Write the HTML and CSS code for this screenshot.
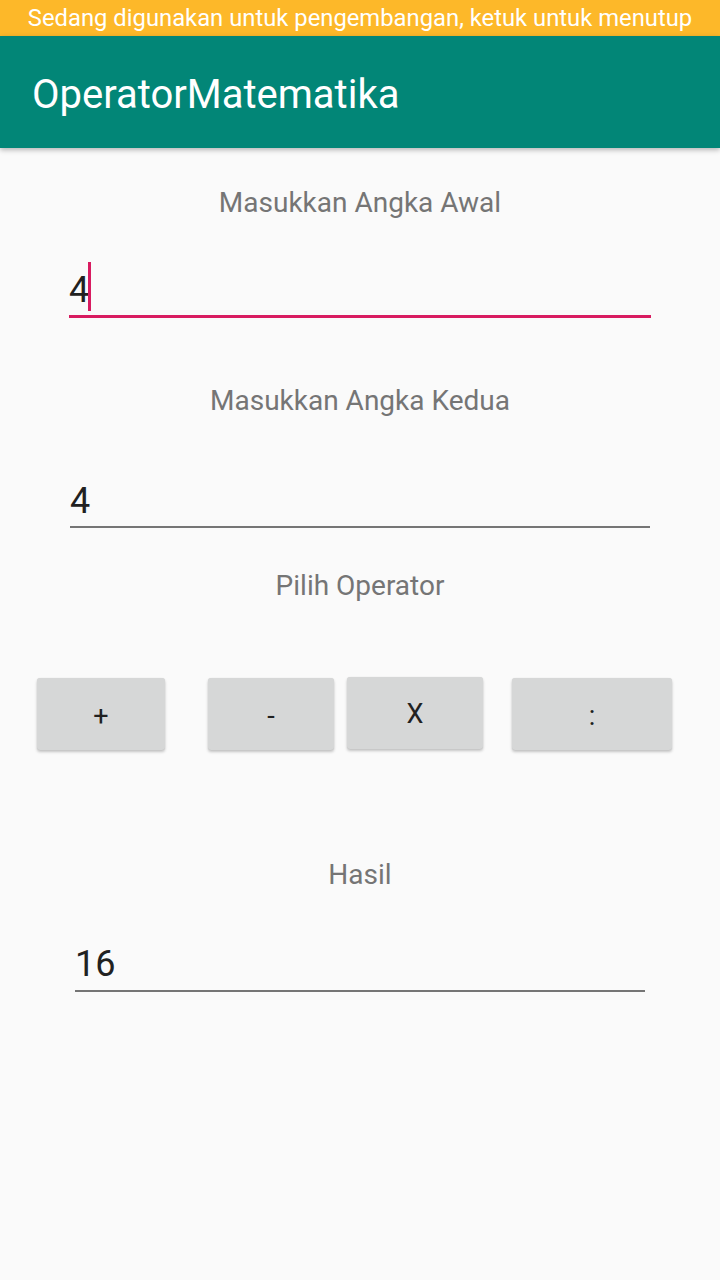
FILE: index.html
```html
<!DOCTYPE html>
<html lang="id">
<head>
<meta charset="utf-8">
<title>OperatorMatematika</title>
<link rel="stylesheet" href="styles.css">
</head>
<body>
<div class="app">
  <div class="devbar">Sedang digunakan untuk pengembangan, ketuk untuk menutup</div>
  <header class="toolbar"><h1 class="title">OperatorMatematika</h1></header>
  <main class="content">
    <div class="label label-first">Masukkan Angka Awal</div>
    <div class="field field-focus f1"><span class="value">4<span class="caret"></span></span></div>
    <div class="label label-second">Masukkan Angka Kedua</div>
    <div class="field f2"><span class="value">4</span></div>
    <div class="label label-third">Pilih Operator</div>
    <div class="ops">
      <button class="btn b1">+</button>
      <button class="btn b2">-</button>
      <button class="btn b3">X</button>
      <button class="btn b4">:</button>
    </div>
    <div class="label label-result">Hasil</div>
    <div class="field f3"><span class="value">16</span></div>
  </main>
</div>
</body>
</html>
```
FILE: styles.css
```css
* { box-sizing: border-box; }
html, body { margin: 0; padding: 0; }
body {
  width: 720px;
  height: 1280px;
  background: #fafafa;
  font-family: Roboto, "Noto Sans", sans-serif;
  overflow: hidden;
}
.app { display: flex; flex-direction: column; height: 1280px; }
.devbar {
  height: 36px;
  background: #fdb829;
  color: #ffffff;
  font-size: 23.8px;
  line-height: 36px;
  text-align: center;
  white-space: nowrap;
}
.toolbar {
  height: 112px;
  background: #028677;
  display: flex;
  align-items: center;
  padding-left: 32px;
  box-shadow: 0 2px 5px rgba(0,0,0,0.28);
  position: relative;
  z-index: 1;
}
.title {
  margin: 0;
  color: #ffffff;
  font-weight: 400;
  font-size: 40px;
  line-height: 48px;
  padding-top: 6px;
}
.content {
  display: flex;
  flex-direction: column;
  padding-top: 38px;
}
.label {
  text-align: center;
  color: #757575;
  font-size: 28px;
  line-height: 33px;
}
.label-second { margin-top: 66px; }
.label-third { margin-top: 41px; }
.label-result { margin-top: 108px; }
.field {
  color: #212121;
  font-size: 36px;
  line-height: 36px;
  padding-bottom: 7px;
  border-bottom: 2px solid #757575;
}
.field-focus { border-bottom: 3px solid #d81b60; }
.f1 { margin: 53px 69px 0 69px; }
.f2 { margin: 66px 70px 0 70px; }
.f3 { margin: 55px 75px 0 75px; padding-bottom: 8px; }
.value { position: relative; display: inline-block; }
.caret {
  position: absolute;
  left: calc(100% - 1px);
  top: -10px;
  width: 3px;
  height: 49px;
  background: #d81b60;
}
.ops {
  display: flex;
  align-items: flex-start;
  margin-top: 76px;
  padding-left: 37px;
  height: 72px;
}
.btn {
  height: 72px;
  border: none;
  border-radius: 3px;
  background: #d6d7d7;
  color: #212121;
  font-family: Roboto, "Noto Sans", sans-serif;
  font-size: 27px;
  padding: 3px 0 0 0;
  box-shadow: 0 2px 3px rgba(0,0,0,0.22), 0 0 1px rgba(0,0,0,0.12);
}
.b1 { width: 128px; }
.b2 { width: 126px; margin-left: 43px; }
.b3 { width: 136px; margin-left: 13px; margin-top: -1px; padding-top: 1px; }
.b4 { width: 160px; margin-left: 29px; }
```
